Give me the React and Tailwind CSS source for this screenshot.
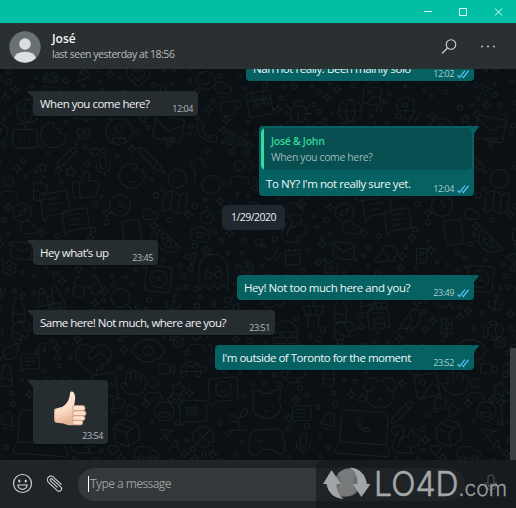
import React from 'react';
import * as L from 'lucide-react';

const TILE = 966;

// [icon, centre x, centre y, size, rotation]
const DOODLES = [
  ['Heart', 415, 20, 84, 0], ['Heart', 415, 18, 44, 0], ['Smile', 618, 35, 66, -10], ['PartyPopper', 265, 5, 80, 0],
  ['Cookie', 160, 198, 92, 0], ['Globe', 85, 125, 84, 0], ['Bot', 75, 200, 110, 0], ['CircleUser', 357, 187, 94, 0],
  ['Mail', 505, 180, 104, 12], ['Phone', 620, 190, 72, 0], ['Star', 430, 150, 30, 0], ['Quote', 250, 195, 46, 0],
  ['Heart', 285, 250, 34, 0], ['Pencil', 200, 265, 72, 0], ['Pencil', 450, 270, 84, 90], ['Send', 505, 218, 40, 20],
  ['Bike', 590, 295, 190, 10], ['Mic', 310, 290, 72, -8], ['ThumbsUp', 258, 345, 96, -4], ['Baby', 395, 320, 100, 0],
  ['CupSoda', 120, 358, 88, 8], ['User', 25, 355, 92, 0], ['Users', 730, 310, 96, 0], ['Star', 212, 307, 36, 10],
  ['Star', 128, 295, 32, -8], ['Coffee', 690, 110, 76, -8], ['Cloud', 670, 55, 60, 0], ['Calendar', 778, 100, 96, -10],
  ['CheckCheck', 270, 140, 68, -10], ['MessageSquareText', 165, 408, 100, -10], ['MessageSquareText', 228, 455, 92, -8],
  ['Compass', 67, 430, 66, 0], ['Clock', 360, 410, 76, 0], ['Map', 525, 400, 92, 8], ['Cloud', 450, 435, 56, 0],
  ['Cloud', 88, 475, 66, 0], ['Smartphone', 395, 490, 88, -8], ['Citrus', 505, 515, 84, 0], ['Camera', 600, 495, 66, 6],
  ['Mail', 65, 545, 74, 6], ['IceCreamCone', 190, 560, 92, 60], ['Settings', 28, 598, 54, 0], ['Send', 570, 570, 48, 0],
  ['CheckCheck', 820, 560, 66, -10], ['Star', 620, 545, 34, 0], ['Calendar', 878, 563, 58, -4], ['IdCard', 299, 560, 52, 90],
  ['Glasses', 260, 650, 106, -10], ['Disc3', 475, 630, 62, 0], ['Square', 475, 630, 102, 6], ['Ghost', 640, 610, 130, 0],
  ['Glasses', 640, 610, 60, -5], ['Dribbble', 742, 597, 46, 0], ['Binoculars', 150, 690, 96, -12], ['Search', 365, 690, 84, 0],
  ['Milk', 55, 725, 86, 0], ['Croissant', 69, 790, 86, 0], ['Backpack', 169, 740, 94, -6], ['Bird', 264, 755, 92, 0],
  ['Flower2', 374, 775, 66, 0], ['Fish', 514, 785, 76, -5], ['TowerControl', 940, 735, 92, 0], ['Hamburger', 855, 790, 92, 0],
  ['Leaf', 30, 850, 66, 0], ['Music', 120, 838, 40, 0], ['MessageSquareText', 90, 880, 66, 0], ['HeartHandshake', 280, 870, 130, 0],
  ['Eye', 445, 845, 116, 0], ['Users', 600, 815, 84, 0], ['Settings', 535, 820, 44, 0], ['Video', 500, 900, 58, 5],
  ['Milk', 20, 920, 76, 0], ['Image', 315, 950, 92, -10], ['Hand', 400, 940, 90, 0], ['User', 460, 960, 88, 0],
  ['Turtle', 580, 900, 90, 0], ['Star', 535, 960, 54, 12], ['MessageSquare', 670, 965, 104, -4], ['Smile', 670, 960, 56, 0],
  ['Cat', 800, 1005, 112, 0], ['Dog', 174, 970, 120, 0], ['Bell', 20, 1055, 60, 15], ['Pencil', 240, 1030, 78, 0],
  ['Laptop', 125, 1088, 210, 4], ['Phone', 125, 1070, 44, 0], ['Play', 395, 1025, 48, 0], ['Laugh', 493, 1027, 70, 0],
  ['MessageSquare', 580, 1030, 96, 0], ['Package', 380, 1092, 100, -10], ['Languages', 510, 1110, 84, 10],
  ['Clover', 610, 1103, 84, 0], ['Gamepad2', 800, 1120, 130, -4], ['Mic', 910, 1125, 72, 0], ['MessageSquareText', 905, 1035, 66, 0],
  ['Heart', 340, 1142, 38, 0], ['Car', 440, 1150, 84, 0], ['Squirrel', 250, 1110, 100, 0], ['Sprout', 715, 1052, 84, 0],
  ['Cloud', 885, 420, 62, 0], ['Squirrel', 880, 480, 94, 0], ['Compass', 960, 190, 70, 0], ['Bug', 895, 130, 92, 0],
  ['Lamp', 880, 330, 70, 20], ['Music', 790, 230, 44, 0], ['Zap', 905, 405, 38, 0], ['Heart', 775, 520, 30, 0],
  ['Guitar', 840, 690, 110, 40], ['Gem', 800, 880, 56, 0], ['Rocket', 700, 700, 84, 0], ['Rabbit', 880, 910, 84, 0],
  ['Timer', 620, 440, 60, 0], ['Anchor', 520, 700, 60, 10], ['Umbrella', 760, 420, 60, 0], ['Droplet', 120, 985, 34, 0],
  ['Apple', 355, 1000, 44, 0], ['Image', 150, 80, 70, 8], ['Sun', 490, 60, 50, 0], ['Camera', 250, 105, 60, 0],
];

const WORDS = [
  ['42', 150, 42, 42, -8], ['24', 782, 112, 46, -10], ['BFF', 705, 238, 52, 32], ['Hi', 574, 1040, 36, 0],
];

const inView = (x) => x > -70 && x < 1620;

// Small rings and sparkles that fill the gaps between the large drawings.
const FILLERS = (() => {
  const out = [];
  let seed = 11;
  const rnd = () => {
    seed = (seed * 16807) % 2147483647;
    return seed / 2147483647;
  };
  for (let n = 0; n < 5000 && out.length < 330; n++) {
    const x = rnd() * TILE;
    const y = rnd() * 1176;
    const clear =
      DOODLES.every(([, a, b, s]) =>
        [-TILE, 0, TILE].every((o) => Math.hypot(a + o - x, b - y) > s * 0.48 + 6)) &&
      out.every((p) => Math.hypot(p.x - x, p.y - y) > 25);
    if (clear) out.push({ x, y, r: 4 + rnd() * 4, star: rnd() < 0.16 });
  }
  return out;
})();

function Wallpaper() {
  return (
    <svg className="absolute inset-0 h-full w-full" viewBox="0 0 1548 1173" preserveAspectRatio="xMinYMin slice" fill="none" stroke="#192024" strokeWidth="3.2">
      {[-TILE, 0, TILE].map((o) => (
        <g key={o} transform={`translate(${o} 0)`}>
          {DOODLES.filter((d) => inView(d[1] + o)).map(([name, x, y, s, r], i) => {
            const Icon = L[name];
            if (!Icon) return null;
            return (
              <g key={i} transform={`translate(${x} ${y}) rotate(${r})`}>
                <Icon x={-s / 2} y={-s / 2} size={s} strokeWidth={3.2} absoluteStrokeWidth color="#192024" />
              </g>
            );
          })}
          {WORDS.filter((w) => w[1] + o > 0 && w[1] + o < 1500).map(([t, x, y, s, r]) => (
            <text key={t} transform={`translate(${x} ${y}) rotate(${r})`} fontSize={s} fontWeight="700" textAnchor="middle" strokeWidth="2.4" fontFamily="Open Sans, sans-serif">{t}</text>
          ))}
          {FILLERS.filter((p) => inView(p.x + o)).map((p, i) =>
            p.star ? (
              <path key={i} transform={`translate(${p.x} ${p.y})`} d="M0-14Q2-2 14 0Q2 2 0 14Q-2 2-14 0Q-2-2 0-14Z" />
            ) : (
              <circle key={i} cx={p.x} cy={p.y} r={p.r} />
            ))}
        </g>
      ))}
    </svg>
  );
}

function Checks() {
  return (
    <svg className="ml-[3px] h-[9px] w-3" viewBox="0 0 12 9" fill="none" stroke="#4fc0ef" strokeWidth="1.35">
      <path d="M.5 5.300 2.500 7.500 8 .7M5.400 6.400l1 1.100L11.600.7" />
    </svg>
  );
}

function Stamp({ time, read }) {
  return (
    <span className={`flex items-center whitespace-nowrap text-[9px] leading-[10px] tracking-[-0.44px] ${read ? 'text-[#a5cdca]' : 'text-[#b4b8ba]'}`}>
      {time}
      {read && <Checks />}
    </span>
  );
}

function Incoming({ text, time, width, tracking }) {
  return (
    <div className={`relative flex h-[25px] shrink-0 items-end justify-between rounded-[4px] rounded-tl-none bg-[#262d31] pr-[5px] pl-[7px] shadow-[0_1px_1px_#080d10] ${width}`}>
      <svg className="absolute top-0 -left-[6px] h-2 w-[7px]" viewBox="0 0 7 8"><path d="M0 0H7V8L1 1.3Z" fill="#262d31" /></svg>
      <span className={`pb-[5px] text-[11.5px] leading-[15px] whitespace-nowrap text-[#f2f3f3] ${tracking}`}>{text}</span>
      <span className="pb-[2px]"><Stamp time={time} /></span>
    </div>
  );
}

function Tail() {
  return <svg className="absolute top-0 -right-[5px] h-[9px] w-[6px]" viewBox="0 0 6 9"><path d="M0 0H6L5.5 1.3 0 8.5Z" fill="#056162" /></svg>;
}

function Outgoing({ text, time, width, tracking, tail = true }) {
  return (
    <div className={`relative flex h-[25px] shrink-0 items-end justify-between self-end rounded-[4px] bg-[#056162] pr-[5px] pl-[7px] shadow-[0_1px_1px_#080d10] ${width}`}>
      {tail && <Tail />}
      <span className={`pb-[5px] text-[11.5px] leading-[15px] whitespace-nowrap text-[#f2f6f6] ${tracking}`}>{text}</span>
      <span className="pb-[2px]"><Stamp time={time} read /></span>
    </div>
  );
}

function Thumb() {
  return (
    <svg className="h-[35px] w-[33px]" viewBox="0 0 33 35">
      <defs>
        <linearGradient id="skin" x1="0" y1="0" x2="0.3" y2="1">
          <stop offset="0" stopColor="#fff0e2" />
          <stop offset="0.6" stopColor="#fbdcc6" />
          <stop offset="1" stopColor="#e6b196" />
        </linearGradient>
      </defs>
      <path d="M.7 18C4 16.600 7.500 16.800 10 14.800 13.300 12 15.700 8 16 2.500 16.100.2 18.600 0 19.800 1.800 22.200 5.400 20.800 10.500 20 15H25V32C20 35.400 14 34.700 9.500 32.600 6.400 31.500 3.500 32.500 1 31.200-.2 27 0 21 .7 18Z" fill="url(#skin)" />
      <path d="M1 19C.4 23 .5 28 1.200 31" stroke="#d9a58b" strokeWidth="1" fill="none" />
      <g fill="#fde0cc" stroke="#cf957b" strokeWidth=".9">
        <rect x="18.500" y="14.600" width="12.500" height="5.300" rx="2.600" />
        <rect x="18.800" y="19.700" width="13.200" height="5.200" rx="2.600" />
        <rect x="18.600" y="24.700" width="12.400" height="4.900" rx="2.400" />
        <rect x="18.400" y="29.300" width="10.400" height="4.600" rx="2.300" />
      </g>
    </svg>
  );
}

function Watermark() {
  return (
    <div className="absolute top-0 right-0 h-12 w-[200px] rounded-tl-lg bg-[#101519]/60">
      <svg className="h-12 w-[200px]" viewBox="316 460 200 48">
        <circle cx="347" cy="483.500" r="13" fill="#6b6e70" />
        <path d="M338 473Q345 467 353 468.500L359 473Q349 479 355.500 491Q349 497.500 341 496.500 337 494 335.500 490 345 484 338 473Z" fill="#77797b" />
        <path d="M331.500 470 341 484H336.500Q336 493 343.500 499 329 497.500 326.500 484H323Z" fill="#a2a4a5" />
        <path d="M361.500 497 352.500 484H357.500Q358 473 350 467.500 364.500 469 367 484H370.500Z" fill="#a2a4a5" />
        <text x="374" y="495.500" fontSize="34.500" fontWeight="300" fontFamily="Inter, sans-serif" fill="#a5a7a8" stroke="#a5a7a8" strokeWidth=".6" textLength="84.500" lengthAdjust="spacingAndGlyphs">LO4D</text>
        <text x="458.500" y="495.500" fontSize="21.500" fontWeight="300" fontFamily="Inter, sans-serif" fill="#9a9d9e" stroke="#9a9d9e" strokeWidth=".3" textLength="48.500" lengthAdjust="spacingAndGlyphs">.com</text>
      </svg>
    </div>
  );
}

export default function App() {
  return (
    <div className="flex h-[508px] w-[516px] flex-col overflow-hidden bg-[#0a1014] font-['Open_Sans','Noto_Sans',sans-serif]">
      <div className="flex h-[23px] shrink-0 items-center justify-end bg-[#00bfa5]">
        <svg className="h-[23px] w-[100px]" viewBox="416 0 100 23" fill="none" stroke="#e4fffb" strokeWidth="1">
          <path d="M424 11.500H432M459.500 8.500H466.500V15.500H459.500ZM495 8.500 502 15.500M502 8.500 495 15.500" />
        </svg>
      </div>

      <header className="flex h-[46px] shrink-0 items-center justify-between border-t border-[#24393a] bg-[#2a2f32]">
        <div className="flex items-center gap-[11px] pl-[9px]">
          <svg className="h-8 w-8" viewBox="0 0 32 32">
            <defs><clipPath id="face"><circle cx="16" cy="16" r="15.700" /></clipPath></defs>
            <circle cx="16" cy="16" r="15.700" fill="#6a7175" />
            <g clipPath="url(#face)" fill="#dcdedf">
              <circle cx="16" cy="13" r="5.800" />
              <path d="M5 27Q7 20.800 16 20.800T27 27V32H5Z" />
            </g>
          </svg>
          <div className="flex flex-col">
            <span className="text-[12px] leading-4 font-semibold text-[#f4f5f5]">José</span>
            <span className="text-[10.5px] leading-[15px] tracking-[-0.46px] whitespace-nowrap text-[#b9bcbd]">last seen yesterday at 18:56</span>
          </div>
        </div>
        <svg className="h-[46px] w-[86px]" viewBox="430 23 86 46" fill="none" stroke="#d3d6d7" strokeWidth="1.100">
          <circle cx="451" cy="43.500" r="4.800" />
          <path d="M447.500 47 442 52.500" />
          <g fill="#d3d6d7" stroke="none"><circle cx="482" cy="45.500" r=".9" /><circle cx="488" cy="45.500" r=".9" /><circle cx="494" cy="45.500" r=".9" /></g>
        </svg>
      </header>

      <main className="relative h-[391px] shrink-0 overflow-hidden">
        <Wallpaper />
        <div className="relative flex h-full flex-col items-start justify-end gap-[10px] pr-[42px] pb-4 pl-[33px]">
          <Outgoing text="Nah not really. Been mainly solo" time="12:02" width="w-[228px]" tracking="tracking-[-0.46px]" tail={false} />
          <Incoming text="When you come here?" time="12:04" width="w-[165px]" tracking="tracking-[-0.5px]" />
          <div className="relative -mb-px flex h-[70px] w-[215px] shrink-0 flex-col self-end rounded-[4px] bg-[#056162] p-[2px] shadow-[0_1px_1px_#080d10]">
            <Tail />
            <div className="flex h-[42px] shrink-0 overflow-hidden rounded-[5px] bg-[#074f50]">
              <div className="w-[3px] bg-[#35dd9a]" />
              <div className="flex flex-col pt-[5px] pl-[7px] text-[10.5px] leading-[16px]">
                <span className="font-semibold tracking-[-0.3px] text-[#35d996]">José &amp; John</span>
                <span className="tracking-[-0.38px] text-[#9cb9b9]">When you come here?</span>
              </div>
            </div>
            <div className="flex flex-1 items-end justify-between pr-[3px] pl-[5px]">
              <span className="pb-[3px] text-[11.5px] leading-[15px] tracking-[-0.43px] whitespace-nowrap text-[#f2f6f6]">To NY? I'm not really sure yet.</span>
              <Stamp time="12:04" read />
            </div>
          </div>
          <div className="ml-[189px] flex h-[25px] w-[63px] shrink-0 items-center justify-center rounded-[5px] bg-[#1e282e] text-[10.5px] tracking-[-0.55px] text-[#eceeef]">1/29/2020</div>
          <Incoming text="Hey what’s up" time="23:45" width="w-[125px]" tracking="tracking-[-0.47px]" />
          <Outgoing text="Hey! Not too much here and you?" time="23:49" width="w-[237px]" tracking="tracking-[-0.43px]" />
          <Incoming text="Same here! Not much, where are you?" time="23:51" width="w-[242px]" tracking="tracking-[-0.52px]" />
          <Outgoing text="I'm outside of Toronto for the moment" time="23:52" width="w-[259px]" tracking="tracking-[-0.49px]" />
          <div className="relative flex h-16 w-[75px] shrink-0 flex-col items-end justify-between rounded-[4px] rounded-tl-none bg-[#262d31] pt-[11px] pr-[5px] pb-[3px] shadow-[0_1px_1px_#080d10]">
            <svg className="absolute top-0 -left-[6px] h-2 w-[7px]" viewBox="0 0 7 8"><path d="M0 0H7V8L1 1.3Z" fill="#262d31" /></svg>
            <div className="pr-4"><Thumb /></div>
            <Stamp time="23:54" />
          </div>
        </div>
        <div className="absolute right-0 bottom-0 h-[112px] w-[6px] bg-[#3a3f42]" />
      </main>

      <footer className="relative flex h-12 shrink-0 items-center bg-[#1e2428]">
        <svg className="h-12 w-[78px] shrink-0" viewBox="0 460 78 48" fill="none" stroke="#d0d3d4" strokeWidth="1.200">
          <circle cx="22.500" cy="483.500" r="9" />
          <path d="M17.800 485H27.200Q26.500 489.300 22.500 489.300T17.800 485Z" />
          <g fill="#d0d3d4" stroke="none"><ellipse cx="19.300" cy="481" rx="1.100" ry="1.500" /><ellipse cx="25.700" cy="481" rx="1.100" ry="1.500" /></g>
          <path transform="translate(55 483.500) rotate(43)" strokeWidth="1.100" d="M5.500-3.600H-5.500A3.600 3.600 0 0 0-5.500 3.600H6.500A2.500 2.500 0 0 0 6.500-1.400H-5A1.200 1.200 0 0 0-5 1.100H4.500" />
        </svg>
        <div className="flex h-[33px] w-[387px] items-center rounded-full bg-[#33383b] pl-[10px]">
          <div className="h-4 w-px bg-white" />
          <span className="pl-px text-[12px] tracking-[-0.56px] text-[#989c9e]">Type a message</span>
        </div>
        <svg className="ml-[20px] h-[22px] w-3" viewBox="0 0 12 22" fill="none" stroke="#aaadae" strokeWidth="1.100">
          <rect x="3" y="2" width="6" height="12" rx="3" />
          <path d="M1 9V12Q1.500 16.500 6 16.500T11 12V9M6 16.500V20" />
        </svg>
        <Watermark />
      </footer>
    </div>
  );
}
